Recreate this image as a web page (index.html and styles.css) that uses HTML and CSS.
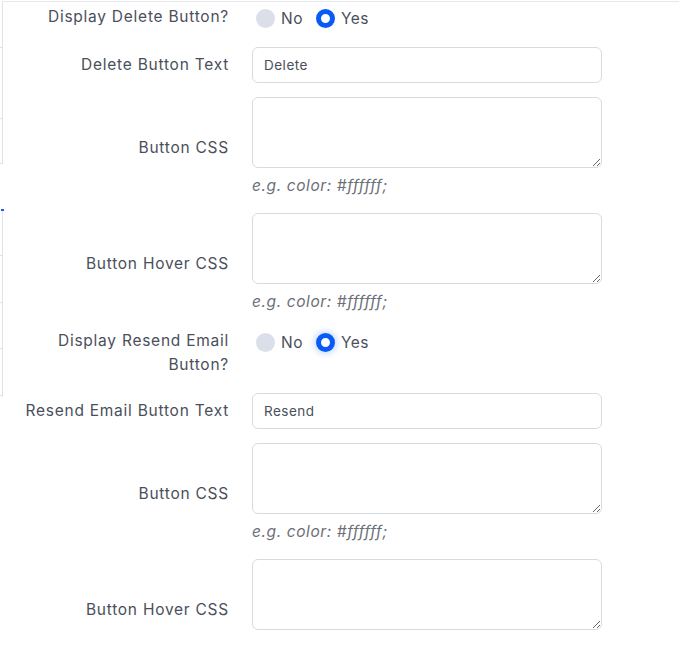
FILE: index.html
```html
<!DOCTYPE html>
<html>
<head>
<meta charset="utf-8">
<link rel="stylesheet" href="styles.css">
</head>
<body>
<div class="backdrop">
  <div class="edge edge-a">
    <span class="tick" style="top:46px"></span>
    <span class="tick" style="top:117px"></span>
    <span class="tick" style="top:162px"></span>
  </div>
  <div class="edge edge-b">
    <span class="tick tick-blue" style="top:0px"></span>
    <span class="tick" style="top:46px"></span>
    <span class="tick" style="top:93px"></span>
    <span class="tick" style="top:139px"></span>
    <span class="tick" style="top:186px"></span>
  </div>
</div>
<form class="form">
  <div class="row row-radio">
    <div class="label">Display Delete Button?</div>
    <div class="radios">
      <label class="radio"><span class="dot"></span>No</label>
      <label class="radio"><span class="dot on"></span>Yes</label>
    </div>
  </div>
  <div class="row row-input">
    <div class="label">Delete Button Text</div>
    <div class="field"><input class="input" type="text" value="Delete"></div>
  </div>
  <div class="row">
    <div class="label">Button CSS</div>
    <div class="field"><textarea class="area"></textarea><div class="hint">e.g. color: #ffffff;</div></div>
  </div>
  <div class="row">
    <div class="label">Button Hover CSS</div>
    <div class="field"><textarea class="area"></textarea><div class="hint">e.g. color: #ffffff;</div></div>
  </div>
  <div class="row row-radio row-tall">
    <div class="label">Display Resend Email<br>Button?</div>
    <div class="radios">
      <label class="radio"><span class="dot"></span>No</label>
      <label class="radio"><span class="dot on focus"></span>Yes</label>
    </div>
  </div>
  <div class="row row-input">
    <div class="label">Resend Email Button Text</div>
    <div class="field"><input class="input" type="text" value="Resend"></div>
  </div>
  <div class="row">
    <div class="label">Button CSS</div>
    <div class="field"><textarea class="area"></textarea><div class="hint">e.g. color: #ffffff;</div></div>
  </div>
  <div class="row">
    <div class="label">Button Hover CSS</div>
    <div class="field field-tail"><textarea class="area"></textarea></div>
  </div>
</form>
</body>
</html>
```
FILE: styles.css
```css
html, body {
  margin: 0;
  padding: 0;
  background: #ffffff;
}
body {
  font-family: Inter, "Open Sans", "Liberation Sans", sans-serif;
  color: #4a4f5a;
  overflow: hidden;
  height: 645px;
  position: relative;
}
.backdrop {
  position: absolute;
  left: 0;
  top: 0;
  right: 0;
  height: 2px;
}
.backdrop::before {
  content: "";
  position: absolute;
  left: 2px;
  right: 0;
  top: 1px;
  height: 1px;
  background: #e6e8ec;
}
.edge {
  position: absolute;
  left: 2px;
  width: 1px;
  background: #dfe3ea;
}
.edge-a { top: 1px; height: 163px; }
.edge-b { top: 209px; height: 188px; }
.tick {
  position: absolute;
  right: 1px;
  width: 2px;
  height: 1px;
  background: #dfe3ea;
}
.tick-blue { background: #1a5cf0; width: 3px; right: -1px; height: 2px; }

.form {
  padding-top: 5px;
}
.row {
  display: grid;
  grid-template-columns: 229px 350px;
  column-gap: 23px;
  align-items: center;
  margin-bottom: 15px;
}
.row-radio {
  align-items: start;
}
.row-tall {
  margin-bottom: 16px;
}
.row-input {
  margin-bottom: 14px;
}
.label {
  text-align: right;
  font-size: 15.5px;
  line-height: 24px;
  letter-spacing: 0.75px;
  color: #4a4f5a;
}
.radios {
  display: flex;
  align-items: center;
  height: 28px;
  margin-top: -1px;
  padding-left: 4px;
  gap: 13px;
}
.radio {
  display: flex;
  align-items: center;
  gap: 6px;
  font-size: 15.5px;
  letter-spacing: 0.5px;
  color: #4a4f5a;
}
.dot {
  width: 19px;
  height: 19px;
  border-radius: 50%;
  background: #dadfe9;
  box-sizing: border-box;
}
.dot.on {
  background: #ffffff;
  border: 5px solid #0a5af5;
}
.dot.focus {
  box-shadow: 0 0 5px 3px rgba(10, 90, 245, 0.16);
}
.field {
  display: flex;
  flex-direction: column;
}
.field-tail {
  padding-bottom: 30px;
}
.input {
  box-sizing: border-box;
  width: 350px;
  height: 36px;
  border: 1px solid #d6dbe3;
  border-radius: 6px;
  padding: 0 11px;
  font-family: inherit;
  font-size: 13.5px;
  letter-spacing: 0.5px;
  color: #4a4f5a;
  outline: none;
}
.area {
  box-sizing: border-box;
  width: 350px;
  height: 71px;
  border: 1px solid #d6dbe3;
  border-radius: 6px;
  padding: 8px 11px;
  font-family: inherit;
  font-size: 13px;
  display: block;
  resize: vertical;
  outline: none;
}
.hint {
  margin-top: 6px;
  font-size: 15.5px;
  line-height: 24px;
  letter-spacing: 0.6px;
  font-style: italic;
  color: #6b6f78;
}
```
